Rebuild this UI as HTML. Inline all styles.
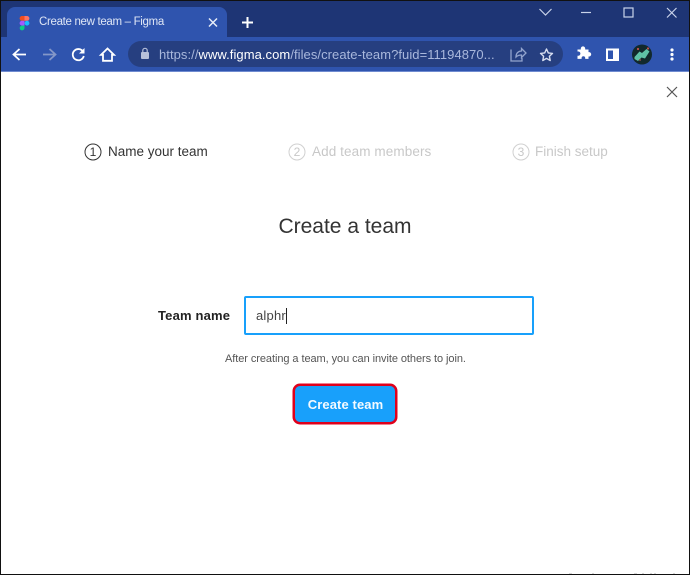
<!DOCTYPE html>
<html><head><meta charset="utf-8">
<style>
html,body{margin:0;padding:0}
body{width:690px;height:575px;position:relative;overflow:hidden;background:#fff;font-family:"Liberation Sans",sans-serif}
.t{position:absolute;white-space:nowrap;line-height:16px}
.a{position:absolute}
svg{position:absolute;left:0;top:0}
</style></head><body>
<div class="a" style="left:0;top:0;width:690px;height:37px;background:#1e3575"></div>
<div class="a" style="left:7px;top:7px;width:220px;height:32px;background:#2f54ae;border-radius:8px 8px 0 0"></div>
<div class="a" style="left:0;top:37px;width:690px;height:34px;background:#2f54ae"></div>
<div class="a" style="left:0;top:71px;width:690px;height:1px;background:#6f8bd0"></div>
<div class="a" style="left:128px;top:41px;width:435px;height:26px;background:#263f80;border-radius:13px"></div>
<div class="t" style="left:39px;top:14px;font-size:11.500px;color:#dfe6f5;letter-spacing:-.32px">Create new team – Figma</div>
<div class="t" style="left:159px;top:47px;font-size:13px;color:#a9b8dc;letter-spacing:.06px">https://<span style="color:#fff">www.figma.com</span>/files/create-team?fuid=11194870...</div>
<svg width="690" height="575" viewBox="0 0 690 575" fill="none">
<!-- figma -->
<path d="M24.500 16h-2.500a2.400 2.400 0 0 0 0 4.800h2.500z" fill="#f24e1e"/><path d="M24.500 16h2.500a2.400 2.400 0 0 1 0 4.800h-2.500z" fill="#ff7262"/>
<path d="M24.500 20.800h-2.500a2.400 2.400 0 0 0 0 4.800h2.500z" fill="#a259ff"/><circle cx="27" cy="23.200" r="2.400" fill="#1abcfe"/>
<path d="M24.500 25.600h-2.500a2.400 2.400 0 1 0 2.500 2.400z" fill="#0acf83"/>
<g stroke="#e8edf8" stroke-width="1.500"><path d="M209 18.500l8 8M217 18.500l-8 8"/></g>
<g stroke="#fff" stroke-width="2"><path d="M242 22.500h11M247.500 17v11"/></g>
<!-- window -->
<g stroke="#c9d3ea" stroke-width="1.200"><path d="M539.500 9l6 6 6-6" /><path d="M581 12.500h10"/><rect x="624" y="8" width="9" height="9"/><path d="M667 8l9.500 9.500M676.500 8l-9.500 9.500"/></g>
<!-- nav -->
<g stroke="#fff" stroke-width="1.800"><path d="M26 54.500H14M19.500 49l-6 5.500 6 5.500"/></g>
<g stroke="#8497c8" stroke-width="1.800"><path d="M43 54.500h12M49.500 49l6 5.500-6 5.500"/></g>
<g stroke="#fff" stroke-width="1.800"><path d="M83 51.500a5.600 5.600 0 1 0 .8 4.500"/></g><path d="M84.500 48v5.500h-5.500z" fill="#fff"/>
<path d="M107.500 48.500l-6.500 6.300h2v6h9v-6h2z" stroke="#fff" stroke-width="1.800"/>
<!-- lock -->
<rect x="141" y="52" width="8" height="7" rx="1" fill="#b6c0da"/><path d="M142.800 52v-1.500a2.200 2.200 0 0 1 4.400 0V52" stroke="#b6c0da" stroke-width="1.200"/>
<!-- share -->
<path d="M511 49.500v11.500h11v-3M516 57c0-4 2.500-6 5.500-6v-2.500l4.500 4.500-4.500 4.500V55c-2.500 0-4 .5-5.500 2z" stroke="#93a4cd" stroke-width="1.300"/>
<!-- star -->
<path d="M546.500 49l1.800 3.900 4.200.5-3.100 2.900.8 4.200-3.700-2.100-3.700 2.100.8-4.200-3.100-2.900 4.200-.5z" stroke="#d7def0" stroke-width="1.400" stroke-linejoin="round"/>
<!-- puzzle -->
<path d="M577.500 52h3.300v-.9a2.200 2.200 0 0 1 4.400 0v.9h3.300v2.600h.5a2.200 2.200 0 0 1 0 4.400h-.5v2.400h-3.300v-.8a1.800 1.800 0 0 0-3.600 0v.8h-4.100v-3.200h.8a2.100 2.100 0 0 0 0-4.200h-.8z" transform="translate(0 -2.500)" fill="#fff"/>
<!-- sidepanel -->
<rect x="607" y="49.500" width="11" height="10.500" stroke="#fff" stroke-width="2"/><rect x="613" y="49" width="5.500" height="11.500" fill="#fff"/>
<!-- avatar -->
<circle cx="642" cy="54.500" r="10" fill="#12292c"/><path d="M634.500 57l5-5.500 2.500 1.500 4.500-4 3 2.500-4.500 7-3.500-1-3.500 3.500-3.500-2z" fill="#5fc2a6"/><circle cx="638" cy="49" r="1.100" fill="#c0504d"/><circle cx="648" cy="48.500" r="1.100" fill="#c0504d"/><circle cx="640" cy="60" r="1" fill="#8d4a47"/>
<!-- dots -->
<circle cx="672" cy="50" r="1.600" fill="#fff"/><circle cx="672" cy="54.500" r="1.600" fill="#fff"/><circle cx="672" cy="59" r="1.600" fill="#fff"/>
<!-- close -->
<path d="M667 87l10 10M677 87l-10 10" stroke="#555" stroke-width="1.200"/>
<!-- steps -->
<circle cx="93" cy="152" r="8" stroke="#333" stroke-width="1"/>
<circle cx="297" cy="152" r="8" stroke="#d0d0d0" stroke-width="1"/>
<circle cx="521" cy="152" r="8" stroke="#d0d0d0" stroke-width="1"/>
<!-- cut-off text at bottom edge -->
<g fill="#d8d8d8"><rect x="569" y="573" width="3" height="1"/><rect x="592" y="573" width="2" height="1"/><rect x="634" y="573" width="3" height="1"/><rect x="642" y="573" width="2" height="1"/><rect x="650" y="573" width="2" height="1"/><rect x="654" y="573" width="2" height="1"/><rect x="673" y="573" width="2" height="1"/></g>
</svg>
<div class="t" style="left:89px;top:144px;width:8px;text-align:center;font-size:12px;color:#333">1</div>
<div class="t" style="left:293px;top:144px;width:8px;text-align:center;font-size:12px;color:#c8c8c8">2</div>
<div class="t" style="left:517px;top:144px;width:8px;text-align:center;font-size:12px;color:#c8c8c8">3</div>
<div class="t" style="left:108px;top:144px;font-size:13.500px;color:#333">Name your team</div>
<div class="t" style="left:312px;top:144px;font-size:13.500px;color:#c8c8c8;letter-spacing:.1px">Add team members</div>
<div class="t" style="left:535px;top:144px;font-size:13.500px;color:#c8c8c8">Finish setup</div>
<div class="t" style="left:0;width:690px;text-align:center;top:215px;font-size:21px;line-height:24px;color:#333">Create a team</div>
<div class="t" style="left:158px;top:308px;font-size:13px;font-weight:bold;color:#222;letter-spacing:.18px">Team name</div>
<div class="a" style="left:244px;top:296px;width:286px;height:35px;border:2px solid #18a0fb;border-radius:2px"></div>
<div class="t" style="left:256px;top:308px;font-size:13px;color:#444;letter-spacing:.2px">alphr</div>
<div class="a" style="left:286px;top:308px;width:1px;height:16px;background:#222"></div>
<div class="t" style="left:225px;top:351px;font-size:11px;color:#555;letter-spacing:-.07px">After creating a team, you can invite others to join.</div>
<div class="a" style="left:293px;top:384px;width:100px;height:36px;background:#18a0fb;border:2px solid #e0001b;border-radius:7px;box-shadow:0 0 0 .5px #e0001b"></div>
<div class="t" style="left:293px;width:105px;text-align:center;top:397px;font-size:13px;font-weight:bold;color:#f4faff;letter-spacing:.1px">Create team</div>
<div class="a" style="left:0;top:0;width:690px;height:1px;background:#111"></div>
<div class="a" style="left:0;top:0;width:1px;height:575px;background:#111"></div>
<div class="a" style="left:689px;top:0;width:1px;height:575px;background:#111"></div>
<div class="a" style="left:0;top:574px;width:690px;height:1px;background:#111"></div>
</body></html>
